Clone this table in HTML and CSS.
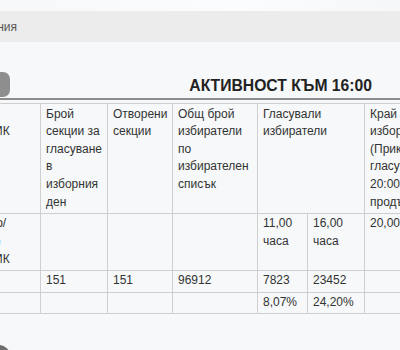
FILE: index.html
```html
<!DOCTYPE html>
<html lang="bg">
<head>
<meta charset="utf-8">
<title>Активност към 16:00</title>
<link rel="stylesheet" href="styles.css">
</head>
<body>
<div class="top"></div>
<nav class="crumbs"><div class="crumbs-inner"><span>Новини и съобщения</span></div></nav>
<div class="title-row">
  <div class="back"></div>
  <h2 class="title">АКТИВНОСТ КЪМ 16:00</h2>
</div>
<table class="stats">
  <colgroup>
    <col class="c0"><col class="c1"><col class="c2"><col class="c3"><col class="c4"><col class="c5"><col class="c6">
  </colgroup>
  <tr>
    <td>№<br>РИК</td>
    <td>Брой<br>секции за<br>гласуване<br>в<br>изборния<br>ден</td>
    <td>Отворени<br>секции</td>
    <td>Общ брой<br>избиратели<br>по<br>избирателен<br>списък</td>
    <td colspan="2">Гласували<br>избиратели</td>
    <td>Край на<br>изборния ден<br>(Приключване на<br>гласуването в<br>20:00 часа или<br>продължава)</td>
  </tr>
  <tr>
    <td>Мо/<br><a class="link" href="#">(1)</a><br>РИК</td>
    <td></td>
    <td></td>
    <td></td>
    <td>11,00<br>часа</td>
    <td>16,00<br>часа</td>
    <td>20,00 часа</td>
  </tr>
  <tr>
    <td></td>
    <td>151</td>
    <td>151</td>
    <td>96912</td>
    <td>7823</td>
    <td>23452</td>
    <td></td>
  </tr>
  <tr>
    <td></td>
    <td></td>
    <td></td>
    <td></td>
    <td>8,07%</td>
    <td>24,20%</td>
    <td></td>
  </tr>
</table>
<div class="dot"></div>
</body>
</html>
```

FILE: styles.css
```css
html, body {
  margin: 0;
  padding: 0;
  width: 400px;
  height: 350px;
  overflow: hidden;
}
body {
  background: #f6f8f9;
  font-family: "Liberation Sans", Arial, sans-serif;
  color: #333;
}
.top {
  height: 11px;
  background: linear-gradient(90deg, #f7f8f9, #fbfcfd 60%, #f5f7f8);
}
.crumbs {
  height: 31px;
  background: #ececec;
  display: flex;
  align-items: center;
}
.crumbs-inner {
  width: 17px;
  display: flex;
  justify-content: flex-end;
  white-space: nowrap;
  font-size: 12px;
  color: #555;
}
.title-row {
  margin-top: 30px;
  height: 26px;
  display: flex;
  justify-content: space-between;
  align-items: flex-end;
  border-bottom: 2px solid #8c8c8c;
}
.back {
  width: 30px;
  height: 25px;
  margin-left: -20px;
  margin-bottom: 1px;
  background: #8e8e8e;
  border-radius: 0 7px 7px 0;
}
.title {
  margin: 0 28px 0 0;
  padding-bottom: 2px;
  font-size: 15.7px;
  line-height: 20px;
  font-weight: bold;
  color: #222;
}
.stats {
  margin-top: 3px;
  margin-left: -20px;
  border-collapse: collapse;
  table-layout: fixed;
  width: 484px;
  font-size: 12px;
  line-height: 17.65px;
}
.stats td {
  border: 1px solid #cfcfcf;
  padding: 1.5px 5px;
  vertical-align: top;
  white-space: nowrap;
  overflow: hidden;
}
.c0 { width: 60px; }
.c1 { width: 67px; }
.c2 { width: 65px; }
.c3 { width: 85px; }
.c4 { width: 50px; }
.c5 { width: 57px; }
.c6 { width: 100px; }
.link {
  color: #2a6ebb;
  text-decoration: none;
}
.dot {
  margin-top: 31px;
  margin-left: -12px;
  width: 22px;
  height: 22px;
  border-radius: 50%;
  background: #6e6e6e;
}
```
